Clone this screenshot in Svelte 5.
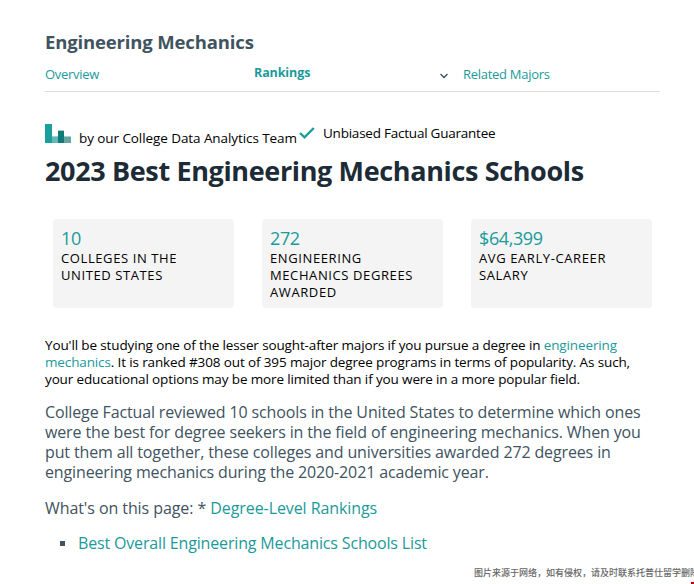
<script lang="ts">
	const stats = [
		{ value: '10', label: ['Colleges in the', 'United States'] },
		{ value: '272', label: ['Engineering', 'Mechanics Degrees', 'Awarded'] },
		{ value: '$64,399', label: ['Avg Early-Career', 'Salary'] }
	];
</script>

<main>
	<header>
		<div class="major"><span>Engineering Mechanics</span></div>
		<nav>
			<a href="#overview"><span>Overview</span></a>
			<a href="#rankings" class="active">
				<span>Rankings</span>
				<svg class="chevron" viewBox="0 0 10 6"><path d="M1.5 1 5 4.5 8.5 1" /></svg>
			</a>
			<a href="#related"><span>Related Majors</span></a>
		</nav>
	</header>

	<div class="byline">
		<svg class="logo" viewBox="0 0 26 19" shape-rendering="crispEdges">
			<path fill="#1a9f9c" d="M0 0h7v19H0z" />
			<path fill="#62b9b7" d="M7 13h6v6H7z" />
			<path fill="#a3cfce" d="M7 12h6v1H7zM13 6h6v1h-6zM19 12h7v1h-7z" />
			<path fill="#0f7a78" d="M13 7h6v12h-6z" />
			<path fill="#65a5a3" d="M19 13h7v6h-7z" />
		</svg>
		<span class="team">by our College Data Analytics Team</span>
		<svg class="check" viewBox="0 0 16 12"><path d="m1 6 4.5 4.3L14.8 1" /></svg>
		<span class="guarantee">Unbiased Factual Guarantee</span>
	</div>

	<h1><span>2023 Best Engineering Mechanics Schools</span></h1>

	<section class="stats">
		{#each stats as { value, label }}
			<div class="card">
				<div class="value"><span>{value}</span></div>
				{#each label as line}
					<div class="label"><span>{line}</span></div>
				{/each}
			</div>
		{/each}
	</section>

	<p class="intro">
		You'll be studying one of the lesser sought-after majors if you pursue a degree in <a href="#major">engineering<br />
		mechanics</a>. It is ranked #308 out of 395 major degree programs in terms of popularity. As such,<br />
		your educational options may be more limited than if you were in a more popular field.
	</p>

	<p class="review">
		College Factual reviewed 10 schools in the United States to determine which ones<br />
		were the best for degree seekers in the field of engineering mechanics. When you<br />
		put them all together, these colleges and universities awarded 272 degrees in<br />
		engineering mechanics during the 2020-2021 academic year.
	</p>

	<p class="contents">What's on this page: * <a href="#levels">Degree-Level Rankings</a></p>

	<ul>
		<li><a href="#list">Best Overall Engineering Mechanics Schools List</a></li>
	</ul>

	<div class="credit">图片来源于网络，如有侵权，请及时联系托普仕留学删除</div>
	<div class="mark"></div>
</main>

<style>
	:global(body) {
		background: #fff;
	}

	main {
		position: relative;
		box-sizing: border-box;
		width: 694px;
		height: 584px;
		padding: 30px 34px 0 45px;
		overflow: hidden;
		font-family: 'Open Sans', 'Noto Sans', sans-serif;
		color: #000;
		white-space: nowrap;
	}

	a {
		color: #1a9a9a;
		text-decoration: none;
	}

	.major {
		font-size: 18.5px;
		font-weight: 700;
		line-height: 24px;
		letter-spacing: -0.15px;
		color: #40535f;
	}

	nav {
		display: grid;
		grid-template-columns: repeat(3, 209px);
		height: 37px;
		border-bottom: 1px solid #dcdfdf;
		font-size: 13px;
		line-height: 20px;
		letter-spacing: -0.28px;

		a {
			padding-top: 10px;
		}

		.active {
			display: flex;
			justify-content: space-between;
			padding: 9px 14px 0 0;
			font-size: 12.5px;
			font-weight: 700;
			letter-spacing: -0.1px;
		}
	}

	.chevron {
		width: 10px;
		height: 6px;
		margin-top: 10px;
		fill: none;
		stroke: #40535f;
		stroke-width: 1.4;
	}

	.byline {
		display: flex;
		height: 19px;
		margin-top: 32px;
		font-size: 13.5px;
		line-height: 20px;
		letter-spacing: -0.08px;
	}

	.logo {
		width: 26px;
		height: 19px;
	}

	.team {
		width: 218px;
		margin: 4px 0 0 8px;
	}

	.check {
		width: 16px;
		height: 12px;
		margin: 3px 8px 0 2px;
		fill: none;
		stroke: #1a9f9c;
		stroke-width: 2.4;
	}

	.guarantee {
		margin-top: -1px;
		letter-spacing: -0.23px;
	}

	h1 {
		margin: 10px 0 0;
		font-size: 27px;
		line-height: 36px;
		letter-spacing: -0.36px;
		color: #1c2b36;
	}

	.stats {
		display: grid;
		grid-template-columns: repeat(3, 181px);
		gap: 28px;
		margin: 30px 0 0 8px;
	}

	.card {
		box-sizing: border-box;
		height: 89px;
		padding: 8px 8px 0;
		border-radius: 4px;
		background: #f4f4f4;
	}

	.value {
		margin-bottom: 1px;
		font-size: 18px;
		line-height: 22px;
		letter-spacing: -0.4px;
		color: #1a9a9a;
	}

	.label {
		font-size: 13px;
		line-height: 17px;
		letter-spacing: 0.6px;
		text-transform: uppercase;
	}

	p {
		margin: 0;
	}

	.intro {
		margin-top: 29px;
		font-size: 13.5px;
		line-height: 17px;
		letter-spacing: -0.13px;
	}

	.review,
	.contents,
	ul {
		font-size: 16px;
		line-height: 20px;
		letter-spacing: -0.135px;
		color: #40535f;
	}

	.review {
		margin-top: 14px;
	}

	.contents {
		margin-top: 16px;
		letter-spacing: -0.08px;
	}

	ul {
		margin: 15px 0 0;
		padding: 0;
		list-style: none;
		letter-spacing: -0.16px;
	}

	li {
		display: flex;
		align-items: center;
		gap: 13px;
		padding-left: 15px;

		&::before {
			content: '';
			width: 5px;
			height: 5px;
			background: #40535f;
		}
	}

	.credit {
		position: absolute;
		top: 566px;
		left: 474px;
		font: 500 9px/14px 'Noto Sans CJK SC', sans-serif;
		color: #666;
	}

	.mark {
		position: absolute;
		right: 0;
		bottom: 0;
		width: 3px;
		height: 2px;
		background: #c00000;
	}
</style>
